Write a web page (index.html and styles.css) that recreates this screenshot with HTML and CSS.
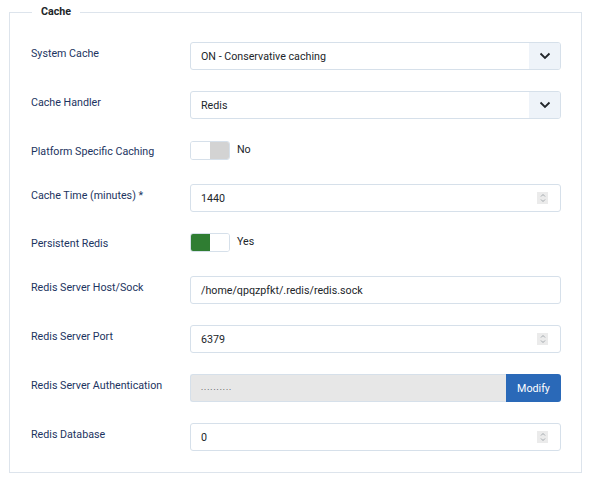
FILE: index.html
```html
<!DOCTYPE html>
<html>
<head>
<meta charset="utf-8">
<link rel="stylesheet" href="styles.css">
</head>
<body>
<div class="page">
<fieldset class="options">
  <legend class="legend">Cache</legend>

  <div class="row">
    <label class="label">System Cache</label>
    <div class="control">
      <div class="select">
        <span class="select-value">ON - Conservative caching</span>
        <span class="caret"><svg width="12" height="8" viewBox="0 0 12 8"><path d="M1.5 1.5 L6 6 L10.5 1.5" fill="none" stroke="#22262a" stroke-width="1.8"/></svg></span>
      </div>
    </div>
  </div>

  <div class="row row-wide">
    <label class="label">Cache Handler</label>
    <div class="control">
      <div class="select">
        <span class="select-value">Redis</span>
        <span class="caret"><svg width="12" height="8" viewBox="0 0 12 8"><path d="M1.5 1.5 L6 6 L10.5 1.5" fill="none" stroke="#22262a" stroke-width="1.8"/></svg></span>
      </div>
    </div>
  </div>

  <div class="row row-toggle">
    <label class="label">Platform Specific Caching</label>
    <div class="control toggle-wrap">
      <span class="toggle off"><span class="knob"></span><span class="track"></span></span>
      <span class="toggle-text">No</span>
    </div>
  </div>

  <div class="row">
    <label class="label">Cache Time (minutes) *</label>
    <div class="control">
      <div class="input number">
        <span>1440</span>
        <span class="spin"><svg width="8" height="10" viewBox="0 0 8 10"><path d="M2 3.5 L4 1.5 L6 3.5 M2 6.5 L4 8.5 L6 6.5" fill="none" stroke="#9aa0a6" stroke-width="0.9"/></svg></span>
      </div>
    </div>
  </div>

  <div class="row row-toggle">
    <label class="label">Persistent Redis</label>
    <div class="control toggle-wrap">
      <span class="toggle on"><span class="track"></span><span class="knob"></span></span>
      <span class="toggle-text">Yes</span>
    </div>
  </div>

  <div class="row">
    <label class="label">Redis Server Host/Sock</label>
    <div class="control">
      <div class="input"><span>/home/qpqzpfkt/.redis/redis.sock</span></div>
    </div>
  </div>

  <div class="row">
    <label class="label">Redis Server Port</label>
    <div class="control">
      <div class="input number">
        <span>6379</span>
        <span class="spin"><svg width="8" height="10" viewBox="0 0 8 10"><path d="M2 3.5 L4 1.5 L6 3.5 M2 6.5 L4 8.5 L6 6.5" fill="none" stroke="#9aa0a6" stroke-width="0.9"/></svg></span>
      </div>
    </div>
  </div>

  <div class="row">
    <label class="label">Redis Server Authentication</label>
    <div class="control">
      <div class="input-group">
        <div class="input disabled"><span class="dots">..........</span></div>
        <button class="btn">Modify</button>
      </div>
    </div>
  </div>

  <div class="row">
    <label class="label">Redis Database</label>
    <div class="control">
      <div class="input number">
        <span>0</span>
        <span class="spin"><svg width="8" height="10" viewBox="0 0 8 10"><path d="M2 3.5 L4 1.5 L6 3.5 M2 6.5 L4 8.5 L6 6.5" fill="none" stroke="#9aa0a6" stroke-width="0.9"/></svg></span>
      </div>
    </div>
  </div>
</fieldset>
</div>
</body>
</html>
```

FILE: styles.css
```css
html, body {
  margin: 0;
  padding: 0;
  background: #fff;
}
body {
  font-family: Roboto, "Liberation Sans", sans-serif;
  font-size: 10.7px;
  color: #22262a;
}
.page {
  padding: 4px 10px 0 9px;
}
.options {
  margin: 0;
  width: 573px;
  box-sizing: border-box;
  border: 1px solid #dde4ec;
  padding: 22px 20px 21px 21px;
}
.legend {
  margin-left: 1px;
  padding: 0 9px;
  font-weight: 700;
  font-size: 10.7px;
  line-height: 16px;
  color: #22262a;
}
.row {
  display: flex;
  align-items: flex-start;
  margin-bottom: 21px;
}
.row-wide {
  margin-bottom: 22px;
}
.row:last-child {
  margin-bottom: 0;
}
.label {
  width: 159px;
  flex: none;
  padding-top: 4px;
  line-height: 16px;
  color: #1c3461;
}
.row-toggle .label {
  padding-top: 3px;
}
.control {
  width: 371px;
}
.select, .input {
  height: 28px;
  box-sizing: border-box;
  border: 1px solid #d6e0ea;
  border-radius: 3px;
  display: flex;
  align-items: center;
  background: #fff;
  overflow: hidden;
}
.select-value, .input > span:first-child {
  padding-left: 10px;
  flex: 1;
}
.caret {
  width: 31px;
  height: 100%;
  background: #eef3f9;
  display: flex;
  align-items: center;
  justify-content: center;
}
.spin {
  flex: none !important;
  width: 11px;
  height: 12px;
  background: #ebebeb;
  margin-right: 12px;
  display: flex;
  align-items: center;
  justify-content: center;
}
.toggle-wrap {
  display: flex;
  align-items: flex-start;
  height: 22px;
}
.toggle {
  width: 40px;
  height: 19px;
  box-sizing: border-box;
  border: 1px solid #d6e0ea;
  border-radius: 3px;
  display: flex;
  overflow: hidden;
}
.toggle .knob {
  flex: 1;
  background: #fff;
}
.toggle .track {
  flex: 1;
}
.toggle.off .track {
  background: #d3d3d3;
}
.toggle.on .track {
  background: #2f7d32;
}
.toggle-text {
  margin-left: 7px;
  line-height: 18px;
  font-weight: 400;
}
.input-group {
  display: flex;
  height: 28px;
}
.input.disabled {
  flex: 1;
  background: #e7e7e7;
  border-radius: 3px 0 0 3px;
  border-right: 0;
}
.dots {
  font-size: 8px;
  letter-spacing: 1px;
  color: #333;
  line-height: 10px;
}
.btn {
  width: 55px;
  border: 0;
  border-radius: 0 3px 3px 0;
  background: #2a69b8;
  color: #fff;
  font-family: Roboto, "Liberation Sans", sans-serif;
  font-size: 10.7px;
  padding: 0;
}
```
